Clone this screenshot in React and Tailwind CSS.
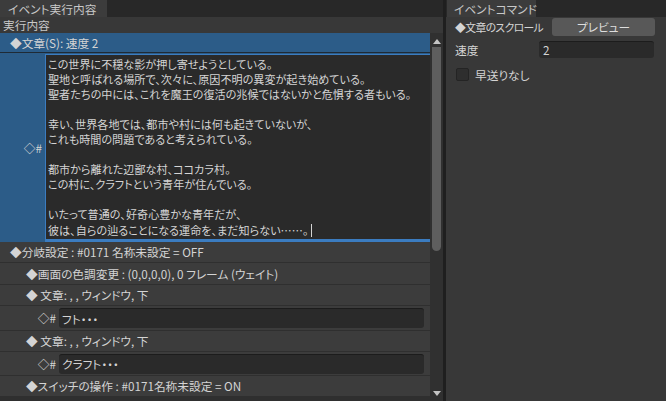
import React from "react";

const story = [
  "この世界に不穏な影が押し寄せようとしている。",
  "聖地と呼ばれる場所で、次々に、原因不明の異変が起き始めている。",
  "聖者たちの中には、これを魔王の復活の兆候ではないかと危惧する者もいる。",
  "",
  "幸い、世界各地では、都市や村には何も起きていないが、",
  "これも時間の問題であると考えられている。",
  "",
  "都市から離れた辺鄙な村、ココカラ村。",
  "この村に、クラフトという青年が住んでいる。",
  "",
  "いたって普通の、好奇心豊かな青年だが、",
  "彼は、自らの辿ることになる運命を、まだ知らない……。",
];

function Row({ children, h, pl }) {
  return (
    <div className={`flex items-center whitespace-nowrap border-b border-[#2f2f2f] bg-[#3c3c3c] ${h} ${pl}`}>
      {children}
    </div>
  );
}

function TextRow({ h, value }) {
  return (
    <div className={`flex items-center border-b border-[#2f2f2f] bg-[#3c3c3c] ${h}`}>
      <span className="w-[59px] pr-[3px] text-right">◇#</span>
      <div className="flex h-[20px] w-[365px] items-center rounded-[3px] border-t border-[#1c1c1c] bg-[#2a2a2a] pl-[3px]">
        {value}
      </div>
    </div>
  );
}

function App() {
  return (
    <div className="flex h-[401px] w-[666px] overflow-hidden bg-[#383838] font-['Noto_Sans_CJK_JP',sans-serif] text-[11.7px] text-[#d4d4d4] [font-feature-settings:'palt']">
      {/* 左パネル */}
      <div className="flex w-[443px] flex-col">
        <div className="flex h-[17px] bg-[#282828]">
          <div className="w-[107px] whitespace-nowrap bg-[#3c3c3c] pl-[8px] leading-[17px] text-[#c8c8c8]">イベント実行内容</div>
        </div>
        <div className="h-[16px] bg-[#383838] pl-[3px] leading-[16px] text-[#c8c8c8]">実行内容</div>
        <div className="flex flex-1 overflow-hidden">
          <div className="flex w-[430px] flex-col bg-[#3c3c3c]">
            {/* 選択中の文章 */}
            <div className="flex flex-col bg-[#2c5c88]">
              <div className="h-[20px] border-b border-[#1f2a35] pl-[10px] leading-[20px]">◆文章(S): 速度 2</div>
              <div className="flex h-[189px] pt-[1px]">
                <div className="flex w-[45px] items-center justify-end pr-[3px]">◇#</div>
                <div className="flex-1 border-b-[3px] border-l border-t border-[#3b7cc0] bg-[#2a2a2a] pl-[2px] pt-[2px] text-[11.1px] leading-[15px]">
                  {story.map((line, i) => (
                    <div key={i} className="h-[15px] whitespace-nowrap">
                      {line}
                      {i === story.length - 1 && <span className="ml-[3px] inline-block h-[13px] w-px translate-y-[2px] bg-[#d4d4d4]" />}
                    </div>
                  ))}
                </div>
              </div>
            </div>
            <Row h="h-[21px]" pl="pl-[10px]">◆分岐設定 : #0171 名称未設定 = OFF</Row>
            <Row h="h-[22px]" pl="pl-[26px]">◆画面の色調変更 : (0,0,0,0), 0 フレーム (ウェイト)</Row>
            <Row h="h-[21px]" pl="pl-[26px]">◆ 文章: , , ウィンドウ, 下</Row>
            <TextRow h="h-[25px]" value="フト・・・" />
            <Row h="h-[21px]" pl="pl-[26px]">◆ 文章: , , ウィンドウ, 下</Row>
            <TextRow h="h-[24px]" value="クラフト・・・" />
            <Row h="h-[21px]" pl="pl-[26px]">◆スイッチの操作 : #0171名称未設定 = ON</Row>
            <div className="flex-1 bg-[#2f2f2f]" />
          </div>
          {/* スクロールバー */}
          <div className="flex w-[13px] flex-col items-center bg-[#303030]">
            <svg width="8" height="5" viewBox="0 0 8 5" className="mt-[6px]">
              <polygon points="4,0 8,5 0,5" fill="#c4c4c4" />
            </svg>
            <div className="mt-[3px] h-[204px] w-[9px] rounded-b-full rounded-t-[4px] bg-[#5e5e5e]" />
            <div className="flex-1" />
            <svg width="8" height="5" viewBox="0 0 8 5" className="mb-[5px]">
              <polygon points="0,0 8,0 4,5" fill="#c4c4c4" />
            </svg>
          </div>
        </div>
      </div>
      <div className="w-[3px] bg-[#1f1f1f]" />
      {/* 右パネル */}
      <div className="flex flex-1 flex-col">
        <div className="flex h-[17px] bg-[#282828]">
          <div className="ml-[1px] w-[89px] whitespace-nowrap bg-[#3c3c3c] pl-[7px] leading-[17px] text-[#c8c8c8]">イベントコマンド</div>
        </div>
        <div className="flex flex-col px-[9px]">
          <div className="mt-[1px] flex h-[18px] items-center">
            <span className="w-[97px] whitespace-nowrap text-[10.8px] tracking-[-0.6px]">◆文章のスクロール</span>
            <div className="flex h-[18px] w-[103px] items-center justify-center rounded-[3px] bg-[#585858] text-[#dedede]">プレビュー</div>
          </div>
          <div className="mt-[5px] flex h-[17px] items-center">
            <span className="w-[84px]">速度</span>
            <div className="flex h-[17px] w-[115px] items-center rounded-[3px] border-t border-[#1c1c1c] bg-[#2a2a2a] pl-[4px]">2</div>
          </div>
          <div className="mt-[8px] flex items-center">
            <div className="ml-[1px] h-[13px] w-[13px] rounded-[2px] border border-[#242424] bg-[#2e2e2e]" />
            <span className="ml-[6px]">早送りなし</span>
          </div>
        </div>
      </div>
    </div>
  );
}

export default App;
